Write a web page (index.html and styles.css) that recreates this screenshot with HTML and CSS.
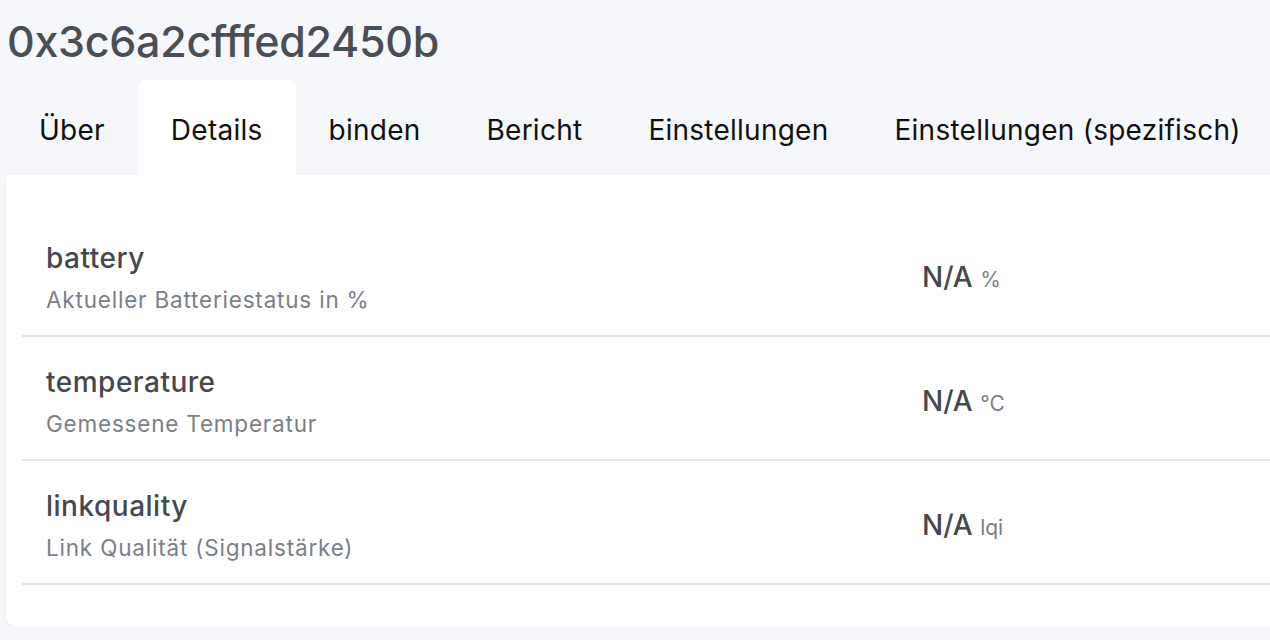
FILE: index.html
```html
<!DOCTYPE html>
<html lang="de">
<head>
<meta charset="utf-8">
<title>0x3c6a2cfffed2450b</title>
<link rel="stylesheet" href="styles.css">
</head>
<body>
<div class="page">
  <h1 class="title">0x3c6a2cfffed2450b</h1>
  <nav class="tabs">
    <a class="tab">Über</a>
    <a class="tab active">Details</a>
    <a class="tab">binden</a>
    <a class="tab">Bericht</a>
    <a class="tab">Einstellungen</a>
    <a class="tab">Einstellungen (spezifisch)</a>
  </nav>
  <section class="card">
    <div class="row">
      <div class="info">
        <div class="name">battery</div>
        <div class="desc">Aktueller Batteriestatus in %</div>
      </div>
      <div class="value">N/A <span class="unit">%</span></div>
    </div>
    <div class="row">
      <div class="info">
        <div class="name">temperature</div>
        <div class="desc">Gemessene Temperatur</div>
      </div>
      <div class="value">N/A <span class="unit">°C</span></div>
    </div>
    <div class="row">
      <div class="info">
        <div class="name">linkquality</div>
        <div class="desc">Link Qualität (Signalstärke)</div>
      </div>
      <div class="value">N/A <span class="unit">lqi</span></div>
    </div>
  </section>
</div>
</body>
</html>
```
FILE: styles.css
```css
html, body {
  margin: 0;
  padding: 0;
  background: #f5f7fa;
  overflow: hidden;
}
body {
  font-family: Inter, "Noto Sans", "Liberation Sans", sans-serif;
  color: #4a4d53;
}
.page {
  width: 1320px;
  padding: 0 0 0 6px;
}
.title {
  margin: 0;
  padding: 15px 0 0 1px;
  height: 66px;
  box-sizing: border-box;
  font-size: 43px;
  font-weight: 500;
  line-height: 52px;
  color: #4b4e54;
  letter-spacing: -0.3px;
}
.tabs {
  display: flex;
  height: 95px;
  margin-top: 14px;
}
.tab {
  display: flex;
  align-items: center;
  padding: 4px 33px 0;
  font-size: 28px;
  letter-spacing: 0.25px;
  color: #111;
  border-radius: 8px 8px 0 0;
}
.tab.active {
  background: #fff;
}
.card {
  background: #fff;
  border-radius: 0 0 10px 10px;
  box-shadow: 0 2px 6px rgba(0,0,0,0.04);
  padding: 38px 0 41px 16px;
}
.row {
  display: grid;
  grid-template-columns: 876px 1fr;
  align-items: center;
  height: 124px;
  box-sizing: border-box;
  border-bottom: 2px solid #e4e6e9;
  padding-left: 24px;
}
.info {
  margin-top: 6px;
}
.name {
  font-size: 28px;
  font-weight: 500;
  line-height: 36px;
  letter-spacing: 0.5px;
  color: #45484e;
}
.desc {
  font-size: 22.5px;
  line-height: 30px;
  margin-top: 9px;
  letter-spacing: 0.8px;
  color: #7b7f86;
}
.value {
  font-size: 28px;
  font-weight: 500;
  color: #45484e;
  padding-top: 6px;
}
.unit {
  font-size: 21px;
  font-weight: 400;
  color: #7b7f86;
  margin-left: 0;
}
```
